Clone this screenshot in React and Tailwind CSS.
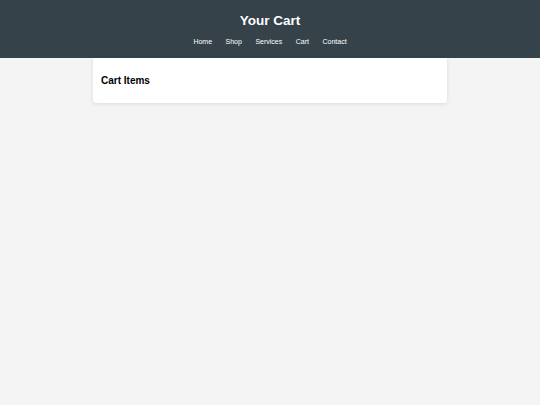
import React from "react";

const links = ["Home", "Shop", "Services", "Cart", "Contact"];

const App = () => {
  return (
    <div className="min-h-[405px] bg-[#f4f4f4] font-['Liberation_Sans',Arial,sans-serif]">
      {/* Header */}
      <header className="h-[58px] bg-[#35424a] text-white flex flex-col items-center">
        <h1 className="mt-[13px] text-[13.5px] leading-[16px] font-bold">Your Cart</h1>
        <nav className="mt-[8px] flex gap-[13.5px] text-[7px] leading-[9px]">
          {links.map((l) => (
            <a key={l} href="#" className="text-white">
              {l}
            </a>
          ))}
        </nav>
      </header>

      {/* Cart */}
      <main className="w-[354px] mx-auto bg-white rounded-b-[3px] shadow-[0_1px_4px_rgba(0,0,0,0.1)] h-[45px] px-[8px] pt-[17px]">
        <h2 className="text-[10px] leading-[12px] font-bold text-black">Cart Items</h2>
      </main>
    </div>
  );
};

export default App;
